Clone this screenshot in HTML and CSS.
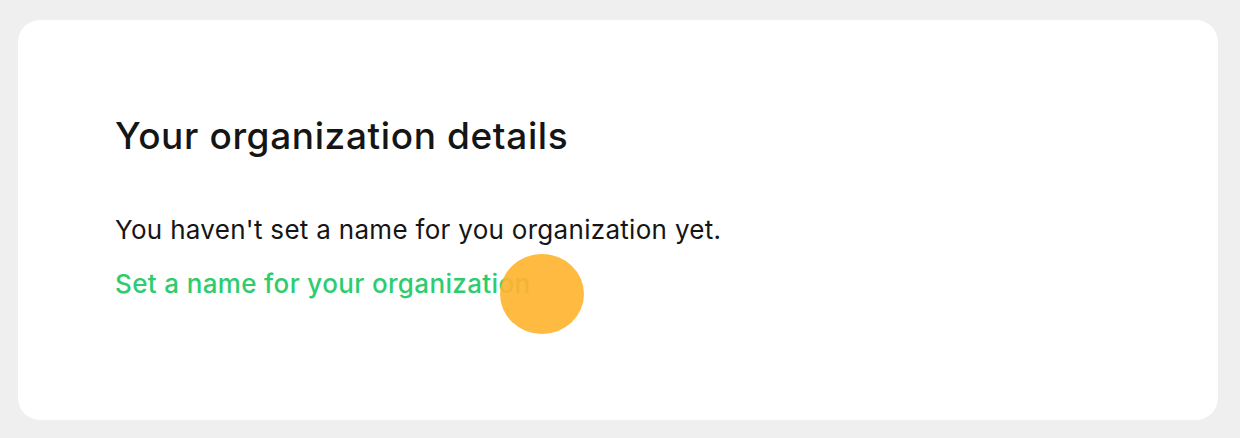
FILE: index.html
```html
<!DOCTYPE html>
<html lang="en">
<head>
    <meta charset="UTF-8">
    <title>Organization details</title>
    <link rel="stylesheet" href="styles.css">
</head>
<body>
    <div class="card">
        <h1>Your organization details</h1>
        <p class="info">You haven't set a name for you organization yet.</p>
        <a class="set-name" href="#">Set a name for your organization</a>
    </div>
    <div class="cursor"></div>
</body>
</html>
```
FILE: styles.css
```css
body {
    margin: 0;
    padding: 20px 22px 18px 18px;
    background-color: #efefef;
    font-family: Inter, "Noto Sans", sans-serif;
    color: #151515;
}
.card {
    background: #fff;
    border-radius: 22px;
    height: 400px;
    box-sizing: border-box;
    padding: 94px 97px;
}
h1 {
    margin: 0;
    font-size: 37px;
    font-weight: 500;
    line-height: 44px;
    letter-spacing: 0.62px;
}
.info {
    margin: 56px 0 0;
    font-size: 26px;
    line-height: 32px;
    letter-spacing: 0.3px;
}
.set-name {
    display: inline-block;
    margin-top: 22px;
    font-size: 26px;
    line-height: 32px;
    font-weight: 500;
    letter-spacing: 0.35px;
    color: #2ecc6e;
    text-decoration: none;
}
.cursor {
    position: absolute;
    left: 500px;
    top: 254px;
    width: 84px;
    height: 80px;
    border-radius: 50%;
    background: rgba(255, 180, 50, 0.92);
}
```
